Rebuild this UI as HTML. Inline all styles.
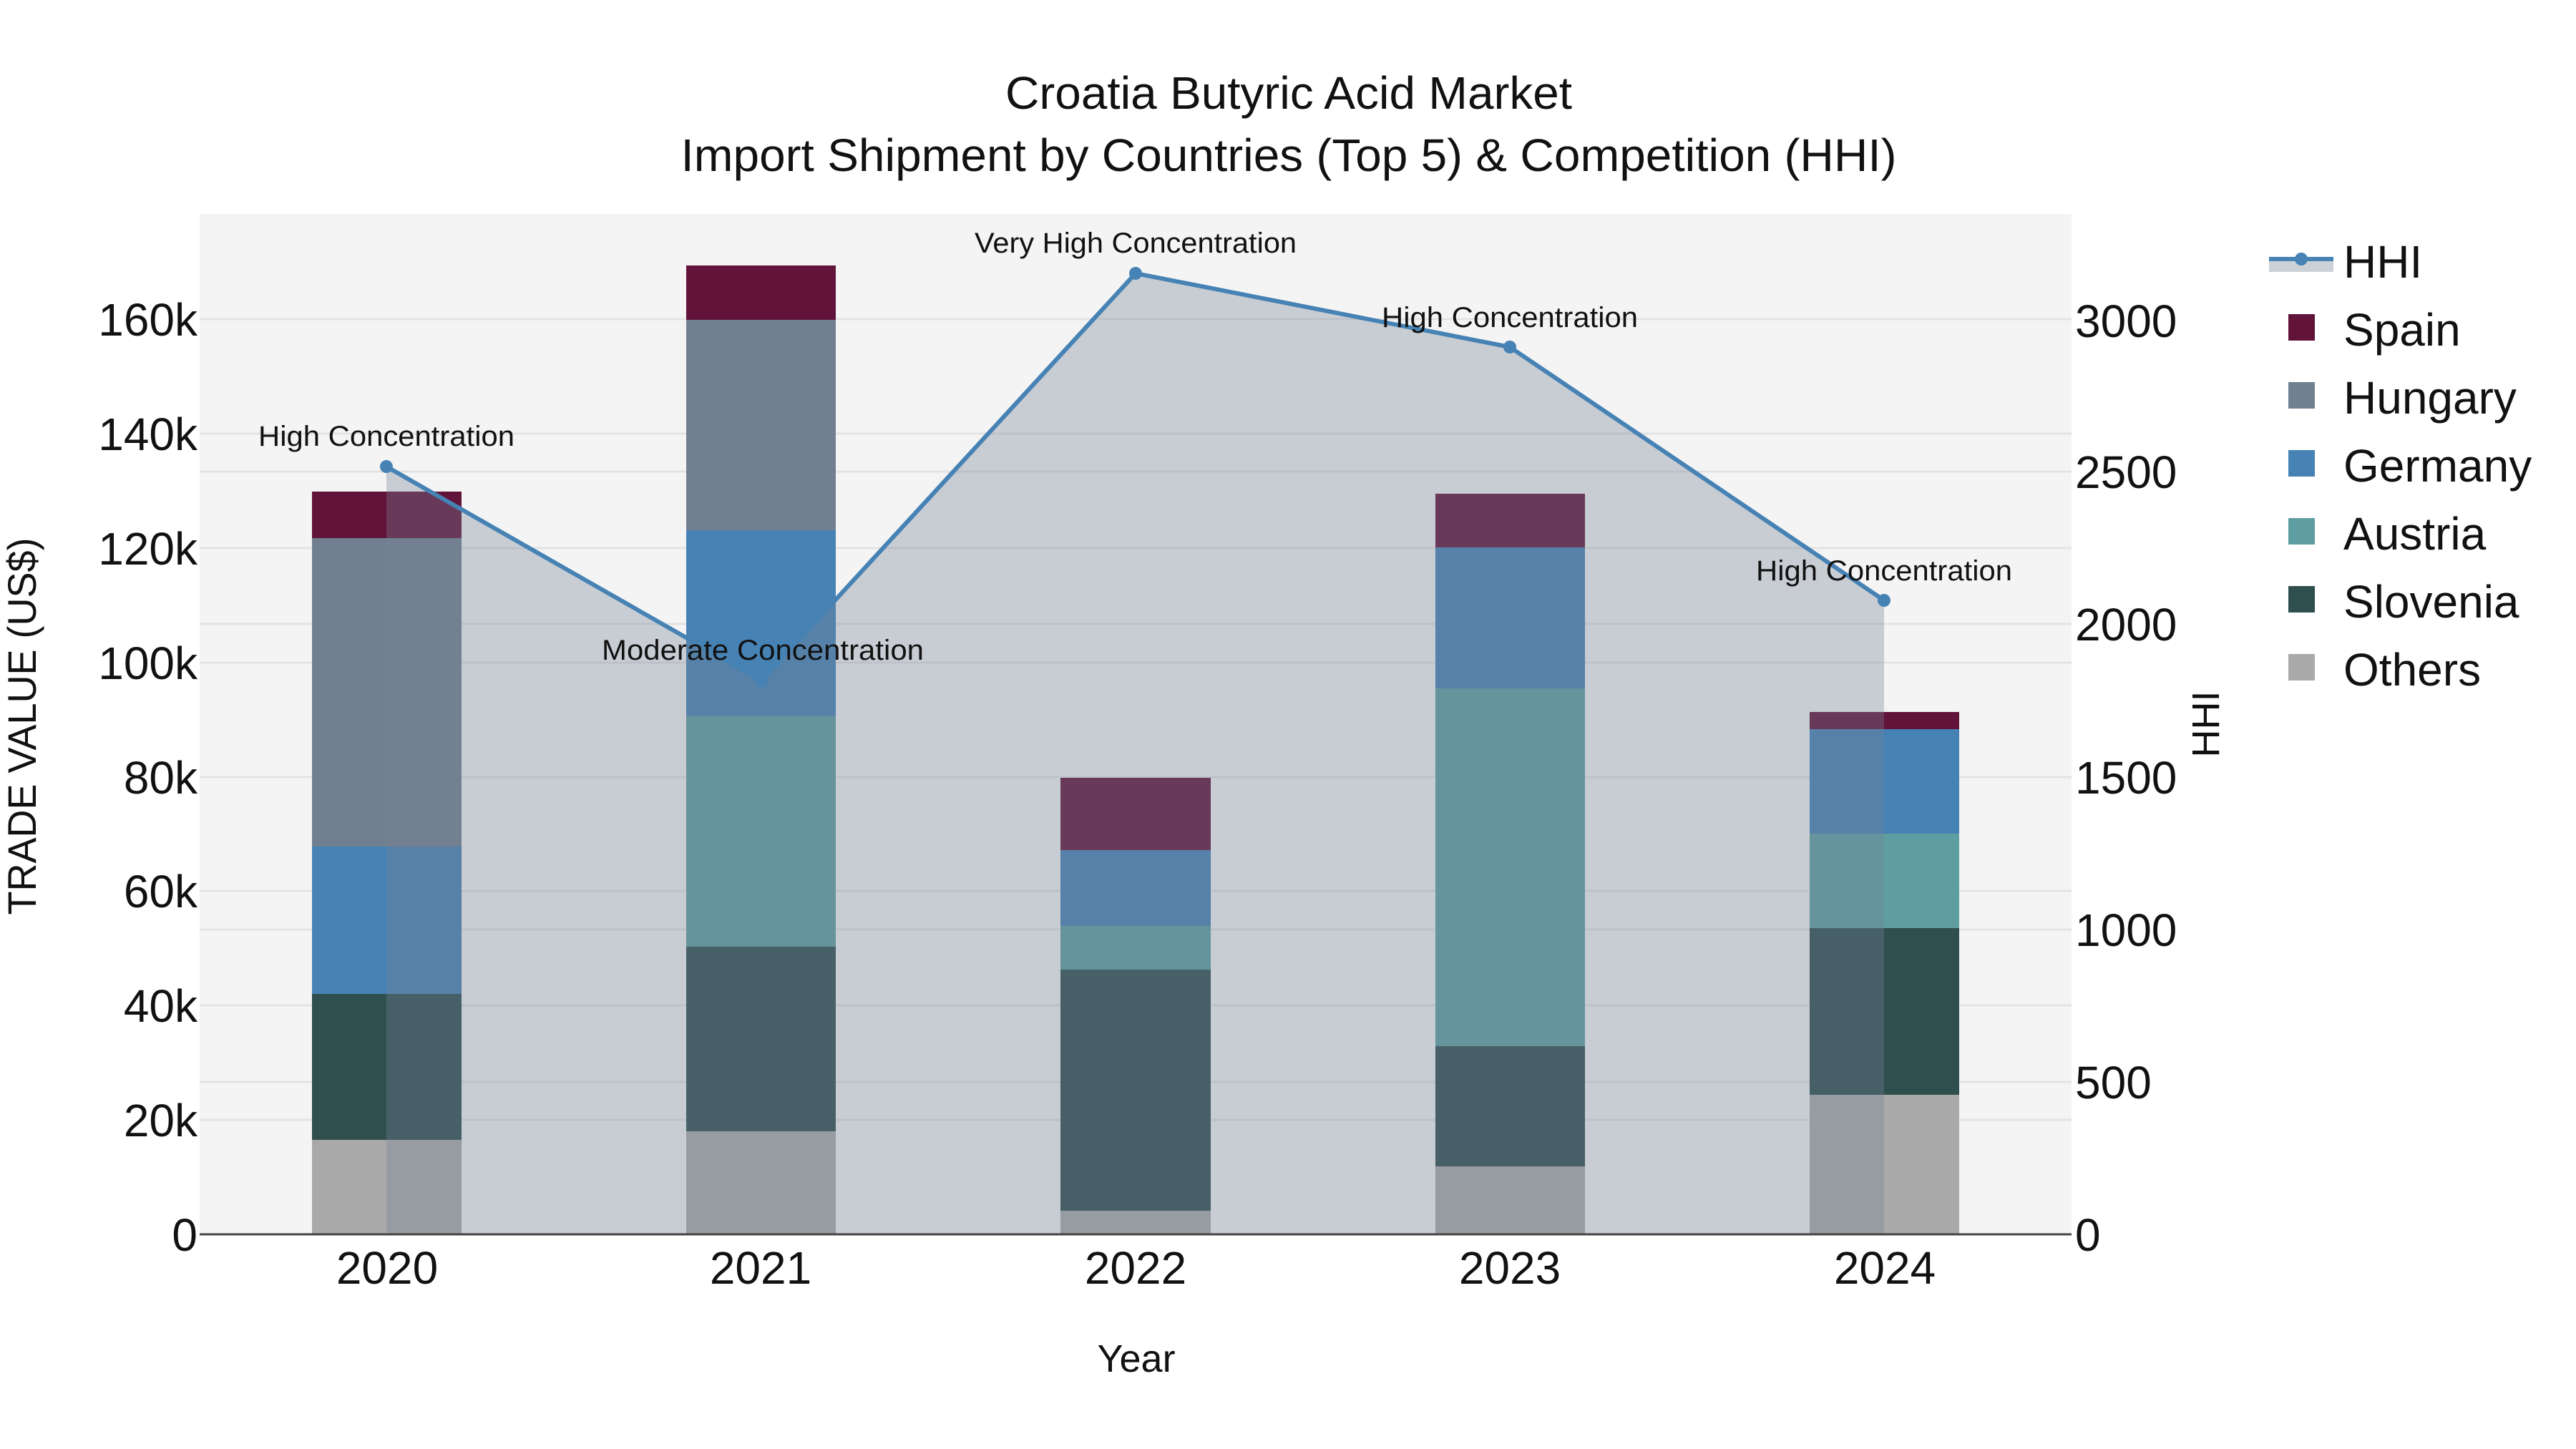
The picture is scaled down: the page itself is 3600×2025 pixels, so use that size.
<!DOCTYPE html>
<html><head><meta charset="utf-8"><style>
html,body{margin:0;padding:0;background:#fff;}
svg{display:block;}
text{font-family:"Liberation Sans",Arial,sans-serif;fill:#111;}
</style></head><body>
<svg width="3600" height="2025" viewBox="0 0 3600 2025" xmlns="http://www.w3.org/2000/svg">
<rect width="3600" height="2025" fill="#fff"/>
<rect x="279" y="299" width="2616" height="1426" fill="#f4f4f4"/>
<g stroke="#e3e3e3" stroke-width="3">
<line x1="279" x2="2895" y1="1565" y2="1565"/>
<line x1="279" x2="2895" y1="1405" y2="1405"/>
<line x1="279" x2="2895" y1="1245" y2="1245"/>
<line x1="279" x2="2895" y1="1086" y2="1086"/>
<line x1="279" x2="2895" y1="926" y2="926"/>
<line x1="279" x2="2895" y1="766" y2="766"/>
<line x1="279" x2="2895" y1="606" y2="606"/>
<line x1="279" x2="2895" y1="446" y2="446"/>
<line x1="279" x2="2895" y1="1512" y2="1512"/>
<line x1="279" x2="2895" y1="1299" y2="1299"/>
<line x1="279" x2="2895" y1="872" y2="872"/>
<line x1="279" x2="2895" y1="659" y2="659"/>
</g>
<g>
<rect x="436" y="1593" width="209" height="132" fill="#a9a9a9"/>
<rect x="436" y="1389" width="209" height="204" fill="#2f4f4f"/>
<rect x="436" y="1183" width="209" height="206" fill="#4682b4"/>
<rect x="436" y="752" width="209" height="431" fill="#708090"/>
<rect x="436" y="687" width="209" height="65" fill="#62133a"/>
<rect x="959" y="1581" width="209" height="144" fill="#a9a9a9"/>
<rect x="959" y="1323" width="209" height="258" fill="#2f4f4f"/>
<rect x="959" y="1001" width="209" height="322" fill="#5f9ea0"/>
<rect x="959" y="741" width="209" height="260" fill="#4682b4"/>
<rect x="959" y="447" width="209" height="294" fill="#708090"/>
<rect x="959" y="371" width="209" height="76" fill="#62133a"/>
<rect x="1482" y="1692" width="210" height="33" fill="#a9a9a9"/>
<rect x="1482" y="1355" width="210" height="337" fill="#2f4f4f"/>
<rect x="1482" y="1294" width="210" height="61" fill="#5f9ea0"/>
<rect x="1482" y="1188" width="210" height="106" fill="#4682b4"/>
<rect x="1482" y="1087" width="210" height="101" fill="#62133a"/>
<rect x="2006" y="1630" width="209" height="95" fill="#a9a9a9"/>
<rect x="2006" y="1462" width="209" height="168" fill="#2f4f4f"/>
<rect x="2006" y="962" width="209" height="500" fill="#5f9ea0"/>
<rect x="2006" y="765" width="209" height="197" fill="#4682b4"/>
<rect x="2006" y="690" width="209" height="75" fill="#62133a"/>
<rect x="2529" y="1530" width="209" height="195" fill="#a9a9a9"/>
<rect x="2529" y="1297" width="209" height="233" fill="#2f4f4f"/>
<rect x="2529" y="1165" width="209" height="132" fill="#5f9ea0"/>
<rect x="2529" y="1019" width="209" height="146" fill="#4682b4"/>
<rect x="2529" y="995" width="209" height="24" fill="#62133a"/>
</g>
<polygon points="540,652 1064,951 1587,382 2110,485 2633,839 2633,1725 540,1725" fill="rgba(117,129,149,0.35)"/>
<line x1="279" x2="2895" y1="1725" y2="1725" stroke="#444" stroke-width="3"/>
<polyline points="540,652 1064,951 1587,382 2110,485 2633,839" fill="none" stroke="#4682b4" stroke-width="6" stroke-linejoin="round"/>
<g fill="#4682b4">
<circle cx="540" cy="652" r="9"/><circle cx="1064" cy="951" r="9"/><circle cx="1587" cy="382" r="9"/><circle cx="2110" cy="485" r="9"/><circle cx="2633" cy="839" r="9"/>
</g>
<g font-size="40" text-anchor="middle">
<text x="540" y="623" textLength="358" lengthAdjust="spacingAndGlyphs">High Concentration</text>
<text x="1066" y="922" textLength="450" lengthAdjust="spacingAndGlyphs">Moderate Concentration</text>
<text x="1587" y="353" textLength="450" lengthAdjust="spacingAndGlyphs">Very High Concentration</text>
<text x="2110" y="457" textLength="358" lengthAdjust="spacingAndGlyphs">High Concentration</text>
<text x="2633" y="811" textLength="358" lengthAdjust="spacingAndGlyphs">High Concentration</text>
</g>
<g font-size="64" text-anchor="end">
<text x="276" y="1748">0</text>
<text x="276" y="1588">20k</text>
<text x="276" y="1428">40k</text>
<text x="276" y="1268">60k</text>
<text x="276" y="1109">80k</text>
<text x="276" y="949">100k</text>
<text x="276" y="789">120k</text>
<text x="276" y="629">140k</text>
<text x="276" y="469">160k</text>
</g>
<g font-size="64" text-anchor="start">
<text x="2900" y="1748">0</text>
<text x="2900" y="1535">500</text>
<text x="2900" y="1322">1000</text>
<text x="2900" y="1109">1500</text>
<text x="2900" y="895">2000</text>
<text x="2900" y="682">2500</text>
<text x="2900" y="471">3000</text>
</g>
<g font-size="64" text-anchor="middle">
<text x="541" y="1794">2020</text>
<text x="1063" y="1794">2021</text>
<text x="1587" y="1794">2022</text>
<text x="2110" y="1794">2023</text>
<text x="2634" y="1794">2024</text>
</g>
<text x="1588" y="1917" font-size="54" text-anchor="middle">Year</text>
<text transform="translate(50,1015) rotate(-90)" font-size="56" text-anchor="middle" textLength="527" lengthAdjust="spacingAndGlyphs">TRADE VALUE (US$)</text>
<text transform="translate(3101,1012) rotate(-90)" font-size="54" text-anchor="middle">HHI</text>
<g font-size="64" text-anchor="middle">
<text x="1801" y="152" textLength="792" lengthAdjust="spacingAndGlyphs">Croatia Butyric Acid Market</text>
<text x="1801" y="239" textLength="1699" lengthAdjust="spacingAndGlyphs">Import Shipment by Countries (Top 5) &amp; Competition (HHI)</text>
</g>
<rect x="3171" y="362" width="90" height="18" fill="#ccd1d8"/>
<line x1="3171" x2="3261" y1="362" y2="362" stroke="#4682b4" stroke-width="6"/>
<circle cx="3216" cy="362" r="9" fill="#4682b4"/>
<g font-size="64">
<text x="3275" y="388">HHI</text>
<text x="3275" y="483">Spain</text>
<text x="3275" y="578">Hungary</text>
<text x="3275" y="673">Germany</text>
<text x="3275" y="768">Austria</text>
<text x="3275" y="863">Slovenia</text>
<text x="3275" y="958">Others</text>
</g>
<rect x="3198" y="439" width="37" height="37" fill="#62133a"/>
<rect x="3198" y="534" width="37" height="37" fill="#708090"/>
<rect x="3198" y="629" width="37" height="37" fill="#4682b4"/>
<rect x="3198" y="724" width="37" height="37" fill="#5f9ea0"/>
<rect x="3198" y="819" width="37" height="37" fill="#2f4f4f"/>
<rect x="3198" y="914" width="37" height="37" fill="#a9a9a9"/>
</svg>
</body></html>
